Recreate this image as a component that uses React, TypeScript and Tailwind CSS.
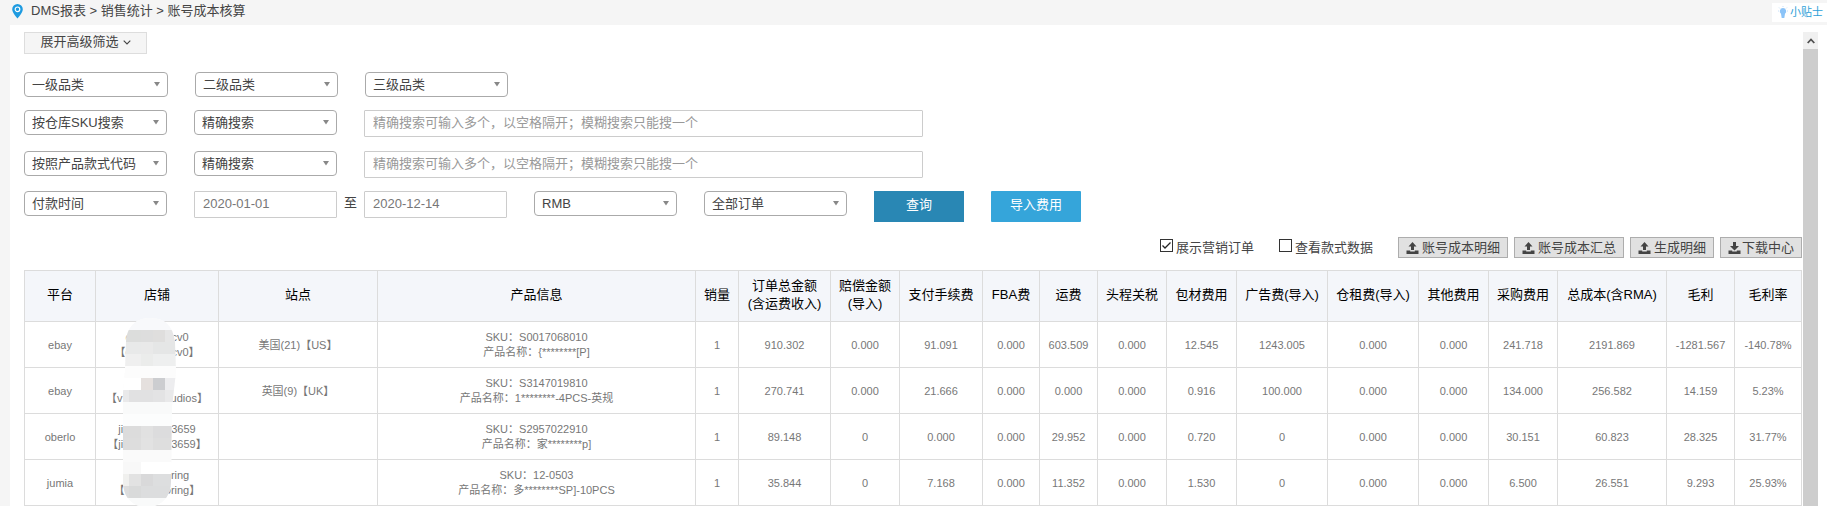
import React from "react";

const COLS = [
  "w-[71px]", "w-[123px]", "w-[159px]", "w-[318px]", "w-[43px]", "w-[92px]", "w-[69px]", "w-[83px]", "w-[57px]", "w-[58px]",
  "w-[69px]", "w-[70px]", "w-[91px]", "w-[91px]", "w-[70px]", "w-[69px]", "w-[109px]", "w-[68px]", "w-[67px]",
];

const HEADS = [
  ["平台"], ["店铺"], ["站点"], ["产品信息"], ["销量"], ["订单总金额", "(含运费收入)"], ["赔偿金额", "(导入)"], ["支付手续费"],
  ["FBA费"], ["运费"], ["头程关税"], ["包材费用"], ["广告费(导入)"], ["仓租费(导入)"], ["其他费用"], ["采购费用"],
  ["总成本(含RMA)"], ["毛利"], ["毛利率"],
];

type Row = { platform: string; shop: [string, string][]; gap: string; site: string; info: [string, string]; nums: string[] };

const ROWS: Row[] = [
  {
    platform: "ebay",
    shop: [["e", "cv0"], ["【e", "cv0】"]],
    gap: "w-10",
    site: "美国(21)【US】",
    info: ["SKU：S0017068010", "产品名称：{********[P]"],
    nums: ["1", "910.302", "0.000", "91.091", "0.000", "603.509", "0.000", "12.545", "1243.005", "0.000", "0.000", "241.718", "2191.869", "-1281.567", "-140.78%"],
  },
  {
    platform: "ebay",
    shop: [["", ""], ["【v", "udios】"]],
    gap: "w-12",
    site: "英国(9)【UK】",
    info: ["SKU：S3147019810", "产品名称：1********-4PCS-英规"],
    nums: ["1", "270.741", "0.000", "21.666", "0.000", "0.000", "0.000", "0.916", "100.000", "0.000", "0.000", "134.000", "256.582", "14.159", "5.23%"],
  },
  {
    platform: "oberlo",
    shop: [["ji", "3659"], ["【ji", "3659】"]],
    gap: "w-12",
    site: "",
    info: ["SKU：S2957022910", "产品名称：家********p]"],
    nums: ["1", "89.148", "0", "0.000", "0.000", "29.952", "0.000", "0.720", "0", "0.000", "0.000", "30.151", "60.823", "28.325", "31.77%"],
  },
  {
    platform: "jumia",
    shop: [["", "oring"], ["【", "oring】"]],
    gap: "w-10",
    site: "",
    info: ["SKU：12-0503", "产品名称：多********SP]-10PCS"],
    nums: ["1", "35.844", "0", "7.168", "0.000", "11.352", "0.000", "1.530", "0", "0.000", "0.000", "6.500", "26.551", "9.293", "25.93%"],
  },
];

/* x, y, width, height, colour of each block of the mask over the shop names */
const BLOCKS: [number, number, number, number, string][] = [
  [0, 0, 60, 13, "#f8f9fb"],
  [5, 13, 16, 12, "#dcdddc"], [21, 13, 12, 12, "#dddddd"], [33, 13, 12, 12, "#dfdedd"], [45, 13, 12, 12, "#e6e6e6"],
  [5, 25, 16, 12, "#e8e9e9"], [21, 25, 12, 12, "#e9e9e9"], [33, 25, 24, 12, "#e5e6e6"],
  [0, 37, 21, 12, "#efefef"], [21, 37, 12, 12, "#ebeceb"], [33, 37, 24, 12, "#eeefef"],
  [0, 49, 60, 12, "#fcfcfc"],
  [0, 61, 21, 12, "#ffffff"], [21, 61, 12, 12, "#e5e0de"], [33, 61, 12, 12, "#cccdd0"], [45, 61, 12, 12, "#ededef"],
  [0, 73, 9, 12, "#e9e9ea"], [9, 73, 24, 12, "#e1e1e2"], [33, 73, 12, 12, "#e3e3e4"], [45, 73, 12, 12, "#e9e9ea"],
  [0, 85, 60, 12, "#f9fafa"],
  [0, 97, 60, 12, "#fcfdfd"],
  [0, 109, 21, 12, "#dcdcdc"], [21, 109, 12, 12, "#e1e1e1"], [33, 109, 24, 12, "#dcdcdd"],
  [0, 121, 21, 12, "#dddddd"], [21, 121, 12, 12, "#e2e2e2"], [33, 121, 24, 12, "#dedede"],
  [0, 133, 60, 12, "#fafafa"],
  [0, 145, 21, 12, "#f8f8f8"], [21, 145, 36, 12, "#ffffff"],
  [0, 157, 9, 12, "#f0f0ee"], [9, 157, 12, 12, "#e2e2e2"], [21, 157, 12, 12, "#d9d9da"], [33, 157, 24, 12, "#dddedf"],
  [0, 169, 9, 12, "#dddddd"], [9, 169, 12, 12, "#d9dada"], [21, 169, 36, 12, "#dcddde"],
  [0, 181, 60, 12, "#f9fafa"],
];

function Mask() {
  return (
    <svg className="pointer-events-none absolute -top-[5px] left-6" width="60" height="190" viewBox="0 0 60 190">
      <clipPath id="mask-shape">
        <path d="M6 25C7 8 17 1 31 1s22 8 24 24l1 30-4 35-1 75c0 14-9 25-24 25S3 180 3 165V75l2-22z" />
      </clipPath>
      <g clipPath="url(#mask-shape)">
        <rect width="60" height="190" fill="#fcfcfc" />
        {BLOCKS.map(([x, y, w, h, c], i) => (
          <rect key={i} x={x} y={y} width={w} height={h} fill={c} />
        ))}
      </g>
    </svg>
  );
}

function Select({ label, wide }: { label: string; wide?: boolean }) {
  return (
    <span className={`relative block ${wide ? "w-36" : "w-[143px]"}`}>
      <select
        aria-label={label}
        className="block h-[25px] w-full appearance-none rounded-[4px] border border-[#aaa] bg-white pl-[7px] pr-5 text-[13px] leading-[22px] text-[#444]"
      >
        <option>{label}</option>
      </select>
      <svg className="pointer-events-none absolute right-2 top-[10px]" width="6" height="5" viewBox="0 0 6 5">
        <path d="M0 0h6L3 4.5z" fill="#888" />
      </svg>
    </span>
  );
}

function SearchInput({ label }: { label: string }) {
  return (
    <input
      aria-label={label}
      placeholder="精确搜索可输入多个，以空格隔开；模糊搜索只能搜一个"
      className="h-[27px] w-[559px] rounded-[1px] border border-[#ccc] px-2 pb-[2px] text-[13px] text-[#666] placeholder:text-[#999]"
    />
  );
}

function DateInput({ label, value }: { label: string; value: string }) {
  return (
    <input
      aria-label={label}
      defaultValue={value}
      className="h-[27px] w-[143px] rounded-[1px] border border-[#ccc] px-2 pb-[2px] text-[13px] text-[#777]"
    />
  );
}

function TrayIcon({ down }: { down?: boolean }) {
  return (
    <svg width="13" height="12" viewBox="0 0 13 12" fill="#444" className="shrink-0">
      <path d={down ? "M5 0h3v4h3L6.500 8.500 2 4h3z" : "M6.500 0L10.500 4.500H8V8H5V4.500H2.500z"} />
      <path d="M.5 8.500h3.700v1h4.600v-1h3.700V12H.5z" />
    </svg>
  );
}

function ToolButton({ label, down }: { label: string; down?: boolean }) {
  return (
    <button
      className={`flex h-[21px] items-center whitespace-nowrap border border-[#adadad] bg-[#e1e1e1] px-[7px] text-[13px] leading-[19px] text-[#444] ${
        down ? "gap-px" : "gap-[3px]"
      }`}
    >
      <TrayIcon down={down} />
      {label}
    </button>
  );
}

function Check({ label, checked }: { label: string; checked?: boolean }) {
  return (
    <label className="flex items-center gap-[3px] whitespace-nowrap text-[13px] leading-[21px] text-[#444]">
      <span className="relative mb-1 block size-[13px]">
        <input type="checkbox" defaultChecked={checked} className="peer block size-[13px] appearance-none border border-[#333] bg-white" />
        <svg className="pointer-events-none absolute inset-0 hidden peer-checked:block" width="13" height="13" viewBox="0 0 13 13">
          <path d="M2.500 6.500L5 9l5.500-5.500" fill="none" stroke="#222" strokeWidth="1.300" />
        </svg>
      </span>
      {label}
    </label>
  );
}

export default function App() {
  return (
    <div className="flex min-h-screen flex-col bg-[#f5f5f5] font-['Liberation_Sans','Noto_Sans_CJK_SC',sans-serif] text-[13px] text-[#444]">
      <header className="flex h-[25px] items-start justify-between pl-3">
        <nav className="flex items-center gap-2 pt-px leading-5">
          <svg width="11" height="15" viewBox="0 0 11 15">
            <path d="M5.500 0a5.300 5.300 0 0 0-5.300 5.300C.2 8.800 5.500 14.500 5.500 14.500s5.300-5.700 5.300-9.200A5.300 5.300 0 0 0 5.500 0z" fill="#1e9be0" />
            <circle cx="5.500" cy="5.300" r="2.300" fill="none" stroke="#fff" strokeWidth="1.200" />
          </svg>
          <span>DMS报表 &gt; 销售统计 &gt; 账号成本核算</span>
        </nav>
        <a href="#tips" className="mt-[3px] flex h-[19px] items-center gap-px bg-white pl-[5px] pr-1 text-[11px] text-[#2d9fd8]">
          <svg width="12" height="14" viewBox="0 0 12 14">
            <path d="M6 2a3.200 3.200 0 0 0-2 5.700L4.700 12h2.600L8 7.700A3.200 3.200 0 0 0 6 2z" fill="#8cc4f8" />
            <path d="M6 0v1M1 5h1M10 5h1M2 1.500l1 1M10 1.500l-1 1" stroke="#c5e0fa" />
          </svg>
          小贴士
        </a>
      </header>

      <div className="flex flex-1 pl-[10px]">
        <div className="flex flex-1 bg-white pr-[9px] pt-[7px]">
          <main className="min-w-0 flex-1 pl-[14px] pr-px">
            <button className="flex h-[22px] w-[123px] items-center justify-center gap-1 border border-[#ddd] bg-[#f5f5f5] pb-[2px] leading-5">
              展开高级筛选
              <svg width="8" height="5" viewBox="0 0 8 5">
                <path d="M.7.700L4 4 7.300.7" fill="none" stroke="#444" strokeWidth="1.100" />
              </svg>
            </button>

            <div className="mt-[18px] flex items-start gap-[27px]">
              <Select label="一级品类" wide />
              <Select label="二级品类" />
              <Select label="三级品类" />
            </div>
            <div className="mt-[13px] flex items-start gap-[27px]">
              <Select label="按仓库SKU搜索" />
              <Select label="精确搜索" />
              <SearchInput label="仓库SKU" />
            </div>
            <div className="mt-[14px] flex items-start gap-[27px]">
              <Select label="按照产品款式代码" />
              <Select label="精确搜索" />
              <SearchInput label="产品款式代码" />
            </div>
            <div className="mt-[13px] flex items-start gap-[27px]">
              <Select label="付款时间" />
              <div className="flex">
                <DateInput label="开始日期" value="2020-01-01" />
                <span className="w-[27px] text-center leading-6">至</span>
                <DateInput label="结束日期" value="2020-12-14" />
              </div>
              <Select label="RMB" />
              <Select label="全部订单" />
              <button className="h-[31px] w-[90px] bg-[#2987b4] pb-[3px] text-white">查询</button>
              <button className="h-[31px] w-[90px] rounded-[1px] bg-[#35a5da] pb-[3px] text-white">导入费用</button>
            </div>

            <div className="mt-[15px] flex items-center justify-end gap-[25px]">
              <Check label="展示营销订单" checked />
              <Check label="查看款式数据" />
              <div className="flex gap-[6px]">
                <ToolButton label="账号成本明细" />
                <ToolButton label="账号成本汇总" />
                <ToolButton label="生成明细" />
                <ToolButton label="下载中心" down />
              </div>
            </div>

            <table className="mt-3 w-full table-fixed border-collapse text-center text-[11px] leading-[15px] text-[#777]">
              <colgroup>
                {COLS.map((c, i) => (
                  <col key={i} className={c} />
                ))}
              </colgroup>
              <thead>
                <tr className="h-[51px] bg-[#f4f6fa] text-[13px] leading-[18px] text-black">
                  {HEADS.map((h, i) => (
                    <th key={i} className="whitespace-nowrap border border-[#dcdcdc] pb-[2px] font-normal">
                      {h.map((line) => (
                        <div key={line}>{line}</div>
                      ))}
                    </th>
                  ))}
                </tr>
              </thead>
              <tbody>
                {ROWS.map((r, i) => (
                  <tr key={i} className="h-[46px] whitespace-nowrap">
                    <td className="border border-[#dcdcdc] pt-[2px]">{r.platform}</td>
                    <td className="relative border border-[#dcdcdc]">
                      {r.shop.map(([start, end], j) => (
                        <div key={j} className="flex h-[15px] justify-center">
                          <span>{start}</span>
                          <span className={r.gap} />
                          <span>{end}</span>
                        </div>
                      ))}
                      {i === 0 && (
                        <div className="absolute left-0 top-0 z-10">
                          <Mask />
                        </div>
                      )}
                    </td>
                    <td className="border border-[#dcdcdc] pt-[2px]">{r.site}</td>
                    <td className="border border-[#dcdcdc]">
                      <div>{r.info[0]}</div>
                      <div>{r.info[1]}</div>
                    </td>
                    {r.nums.map((n, j) => (
                      <td key={j} className="border border-[#dcdcdc] pt-[2px]">{n}</td>
                    ))}
                  </tr>
                ))}
              </tbody>
            </table>
          </main>
          <div className="flex w-[15px] flex-col bg-[#cdcdcd]">
            <div className="flex h-[17px] items-center justify-center bg-[#f0f0f0]">
              <svg width="8" height="6" viewBox="0 0 8 6">
                <path d="M.7 5L4 1.500 7.300 5" fill="none" stroke="#505050" strokeWidth="1.800" />
              </svg>
            </div>
          </div>
        </div>
      </div>
    </div>
  );
}
